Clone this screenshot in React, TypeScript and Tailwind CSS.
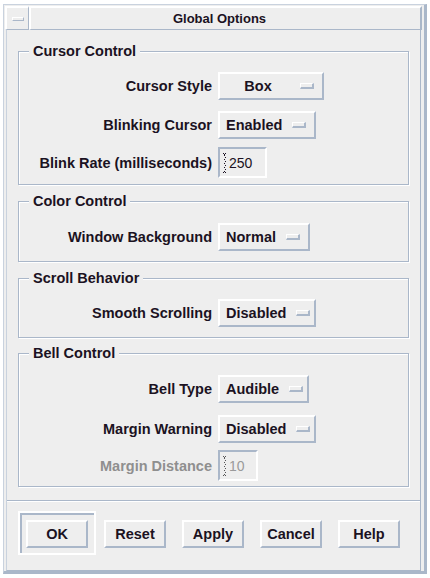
import React from "react";

const font = { fontFamily: '"Liberation Sans", Arial, sans-serif' };

function Group({ title, className, children }: { title: string; className?: string; children: React.ReactNode }) {
  return (
    <div className={"relative border border-[#aab7c9] shadow-[inset_1px_1px_0_#ffffff,1px_1px_0_#ffffff] " + (className ?? "")}>
      <div className="absolute left-[10px] top-[-10px] bg-[#eeeeee] px-[4px] text-[14.5px] font-bold leading-[19px] text-[#1b1222]">
        {title}
      </div>
      {children}
    </div>
  );
}

function Label({ children, disabled }: { children: React.ReactNode; disabled?: boolean }) {
  return (
    <div
      className={
        "w-[193px] shrink-0 text-right text-[14.5px] font-bold leading-[18px] " +
        (disabled ? "text-[#8f8f8f]" : "text-[#1b1222]")
      }
    >
      {children}
    </div>
  );
}

function Option({ value, width }: { value: string; width: string }) {
  return (
    <div
      className={
        "ml-[6px] flex h-[28px] items-center border-2 border-t-white border-l-white border-b-[#aab7c9] border-r-[#aab7c9] pl-[6px] pr-[8px] " +
        width
      }
    >
      <span className="flex-1 text-center text-[14.5px] font-bold leading-[18px] text-[#1b1222]">{value}</span>
      <span className="ml-[10px] h-[6px] w-[14px] shrink-0 border-t border-l border-b-2 border-r-2 border-t-white border-l-white border-b-[#aab7c9] border-r-[#aab7c9]" />
    </div>
  );
}

function IBeam({ color }: { color: string }) {
  return (
    <svg width="5" height="20" viewBox="0 0 5 20" className="shrink-0">
      <rect x="0" y="0" width="1" height="1" fill={color} />
      <rect x="2" y="0" width="1" height="1" fill={color} />
      <rect x="1" y="1" width="1" height="1" fill={color} />
      {Array.from({ length: 8 }).map((_, i) => (
        <rect key={i} x={i % 2 === 0 ? 1 : 2} y={2 + i * 2} width="1" height="1" fill={color} />
      ))}
      <rect x="1" y="18" width="1" height="1" fill={color} />
      <rect x="0" y="19" width="1" height="1" fill={color} />
      <rect x="2" y="19" width="1" height="1" fill={color} />
    </svg>
  );
}

function Field({ value, width, disabled }: { value: string; width: string; disabled?: boolean }) {
  return (
    <div
      className={
        "ml-[6px] flex h-[31px] items-center border-2 border-t-[#aab7c9] border-l-[#aab7c9] border-b-white border-r-white pl-[3px] " +
        width
      }
    >
      <IBeam color={disabled ? "#555555" : "#1b1222"} />
      <span
        className={"ml-[1px] text-[14px] leading-[18px] " + (disabled ? "text-[#9a9a9a]" : "text-[#1b1222]")}
      >
        {value}
      </span>
    </div>
  );
}

function Button({ label }: { label: string }) {
  return (
    <div className="flex h-[28px] w-[62px] items-center justify-center border-2 border-t-white border-l-white border-b-[#aab7c9] border-r-[#aab7c9] text-[14.5px] font-bold leading-[18px] text-[#1b1222]">
      {label}
    </div>
  );
}

export default function App() {
  return (
    <div className="h-[578px] w-[430px] overflow-hidden bg-white" style={font}>
      <div className="ml-[3px] mt-[4px] flex h-[570px] w-[424px] flex-col border-l border-t border-[#c9d2de] border-r-[3px] border-b-[3px] border-r-[#aab7c9] border-b-[#aab7c9] bg-[#eeeeee] pt-[1px] pl-[1px] pr-[2px]">
        {/* title bar */}
        <div className="flex h-[24px] shrink-0">
          <div className="flex w-[24px] items-center justify-center border-t-2 border-l-2 border-b border-r border-t-white border-l-white border-b-[#aab7c9] border-r-[#aab7c9]">
            <span className="h-[4px] w-[12px] border-t border-l border-b border-r border-t-white border-l-white border-b-[#aab7c9] border-r-[#aab7c9]" />
          </div>
          <div className="flex flex-1 items-center justify-center border-t-2 border-l-2 border-b border-r-2 border-t-white border-l-white border-b-[#aab7c9] border-r-[#aab7c9] pr-[12px] text-[13px] font-bold leading-[16px] text-[#1b1222]">
            Global Options
          </div>
        </div>
        {/* content */}
        <div className="ml-[1px] mr-[1px] flex flex-1 flex-col border-l border-b border-r border-l-[#c9d2de] border-b-[#aab7c9] border-r-[#aab7c9]">
          <div className="pl-[11px] pr-[11px] pt-[21px]">
            <Group title="Cursor Control" className="pt-[20px] pb-[6px]">
              <div className="flex items-center">
                <Label>Cursor Style</Label>
                <Option value="Box" width="w-[106px]" />
              </div>
              <div className="mt-[11px] flex items-center">
                <Label>Blinking Cursor</Label>
                <Option value="Enabled" width="w-[98px]" />
              </div>
              <div className="mt-[8px] flex items-center">
                <Label>Blink Rate (milliseconds)</Label>
                <Field value="250" width="w-[49px]" />
              </div>
            </Group>
            <Group title="Color Control" className="mt-[16px] pt-[21px] pb-[10px]">
              <div className="flex items-center">
                <Label>Window Background</Label>
                <Option value="Normal" width="w-[92px]" />
              </div>
            </Group>
            <Group title="Scroll Behavior" className="mt-[16px] pt-[20px] pb-[10px]">
              <div className="flex items-center">
                <Label>Smooth Scrolling</Label>
                <Option value="Disabled" width="w-[98px]" />
              </div>
            </Group>
            <Group title="Bell Control" className="mt-[15px] pt-[21px] pb-[5px]">
              <div className="flex items-center">
                <Label>Bell Type</Label>
                <Option value="Audible" width="w-[91px]" />
              </div>
              <div className="mt-[12px] flex items-center">
                <Label>Margin Warning</Label>
                <Option value="Disabled" width="w-[98px]" />
              </div>
              <div className="mt-[7px] flex items-center">
                <Label disabled>Margin Distance</Label>
                <Field value="10" width="w-[40px]" disabled />
              </div>
            </Group>
          </div>
          {/* separator */}
          <div className="mt-[13px] h-[2px] border-t border-b border-t-[#aab7c9] border-b-white" />
          {/* buttons */}
          <div className="flex items-start pl-[11px] pt-[9px]">
            <div className="border-2 border-white">
              <div className="border-t-2 border-l-2 border-t-[#aab7c9] border-l-[#aab7c9] pl-[4px] pt-[5px] pr-[6px] pb-[5px]">
                <Button label="OK" />
              </div>
            </div>
            <div className="ml-[8px] mt-[9px] flex gap-[16px]">
              <Button label="Reset" />
              <Button label="Apply" />
              <Button label="Cancel" />
              <Button label="Help" />
            </div>
          </div>
        </div>
      </div>
    </div>
  );
}
